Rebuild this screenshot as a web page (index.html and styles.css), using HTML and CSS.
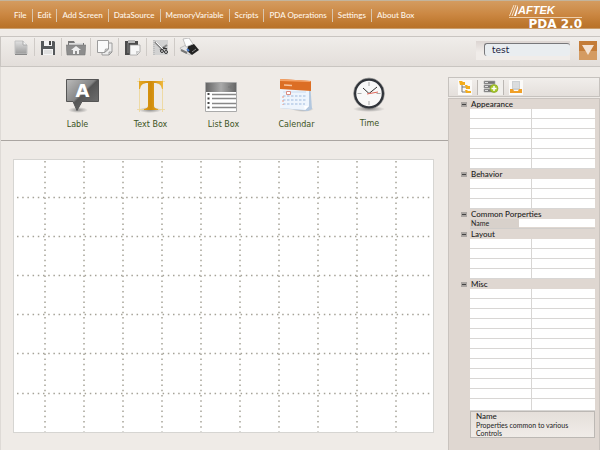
FILE: index.html
```html
<!DOCTYPE html>
<html lang="en">
<head>
<meta charset="utf-8">
<title>PDA 2.0</title>
<link rel="stylesheet" href="styles.css">
</head>
<body>
<header class="topbar">
  <nav class="menu">
    <a href="#">File</a><a href="#">Edit</a><a href="#">Add Screen</a><a href="#">DataSource</a><a href="#">MemoryVariable</a><a href="#">Scripts</a><a href="#">PDA Operations</a><a href="#">Settings</a><a href="#">About Box</a>
  </nav>
  <div class="brand">
    <div class="company">
      <svg width="9" height="11" viewBox="0 0 9 11"><path d="M.500 11 5 0M3 11 7 0" stroke="#f6dfc6" fill="none"/><path d="M5 11 9 0v3L7 11z" fill="#fff"/></svg>
      <span>AFTEK</span>
    </div>
    <div class="product">PDA 2.0</div>
  </div>
</header>

<div class="toolbar">
  <div class="tools">
    <button class="tool" aria-label="New"><svg width="14" height="17" viewBox="0 0 14 17"><defs><linearGradient id="gray" x2="0" y2="1"><stop stop-color="#e2e2e2"/><stop offset="1" stop-color="#9b9b9b"/></linearGradient></defs><path d="M1 2h8l4 4v9H1z" fill="url(#gray)" stroke="#c2c2c2"/><path d="M9 2v4h4" fill="#f4f4f4" stroke="#aaa"/><path d="M1 15.500h12" stroke="#888"/></svg></button>
    <button class="tool" aria-label="Save"><svg width="14" height="17" viewBox="0 0 14 17"><path d="M0 2h13l1 1v13H0z" fill="#55585a"/><path d="M3 2h8v5H3zM2 10h10v6H2z" fill="#f4f4f4"/><path d="M8 2h2v4H8z" fill="#444"/><path d="M3 12h8M3 14h8" stroke="#ccc"/></svg></button>
    <button class="tool wide" aria-label="Home"><svg width="20" height="17" viewBox="0 0 20 17"><path d="M2 2h6l1 2h9v10H2z" fill="#777"/><path d="M3 4h14v2H3z" fill="#ddd"/><path d="M0 6h20l-1 10H1z" fill="#8d8d8d" stroke="#777" stroke-width=".5"/><path d="m5 11 5-4 5 4h-2v4h-2v-3H9v3H7v-4z" fill="#eee"/></svg></button>
    <button class="tool clip" aria-label="Copy"><svg width="16" height="17" viewBox="0 0 16 17"><path d="M5 4h10v9l-3 3H5z" fill="#ededed" stroke="#9c9c9c"/><path d="M.5 1.500h11V10l-4 3.500h-7z" fill="#fafafa" stroke="#9c9c9c"/><path d="M11.500 10h-3l-1 3.500zM15 13h-3v3z" fill="#ddd" stroke="#888" stroke-width=".7"/></svg></button>
    <button class="tool clip" aria-label="Paste"><svg width="16" height="17" viewBox="0 0 16 17"><path d="M0 2h13v14H0z" fill="#4b4b4b"/><path d="M3 1h7v3H3z" fill="#b9b9b9"/><path d="M2 4h2v10H2z" fill="#666"/><path d="M5 6h10v7l-3 3H5z" fill="#f7f7f7" stroke="#999" stroke-width=".7"/><path d="M15 12h-4v4z" fill="#ccc"/></svg></button>
    <button class="tool clip" aria-label="Cut"><svg width="16" height="17" viewBox="0 0 16 17"><path d="M0 1h15v15H0z" fill="#d2d2d2"/><path d="M1 1v15" stroke="#aaa" stroke-dasharray="1 1"/><path d="m2 3 8 8M14 6l-7 5" stroke="#888" stroke-width="2"/><path d="m3 3 7 7" stroke="#fafafa"/><circle cx="9" cy="12" r="1.500" fill="none" stroke="#333"/><circle cx="13" cy="13" r="1.500" fill="none" stroke="#333"/><path d="m10 9 4 1" stroke="#333" stroke-width="1.500"/></svg></button>
    <button class="tool wide" aria-label="Print"><svg width="20" height="18" viewBox="0 0 20 18"><path d="m1 10 6-3 11 4-7 6-8-4z" fill="#e6e6e6" stroke="#999" stroke-width=".5"/><path d="m9 8 6-2 5 6-7 5-5-4z" fill="#222"/><path d="m4 1 6-1 4 6-7 3z" fill="#fff" stroke="#aaa" stroke-width=".7"/><path d="m2 12 6 3" stroke="#777" stroke-width="2"/><path d="m8 11 2 2" stroke="#4a7fd0" stroke-width="2"/><path d="m13 14 4-3" stroke="#888"/></svg></button>
  </div>
  <div class="picker">
    <div class="field"><input type="text" value="test" aria-label="Screen name"></div>
    <button class="drop" aria-label="Show screens"><svg width="12" height="11" viewBox="0 0 12 11"><path d="M0 0h12L6 10z" fill="#f3e3d5"/></svg></button>
  </div>
</div>

<main class="work">
  <section class="editor">
    <div class="palette">
      <button class="widget"><svg width="45" height="35" viewBox="-10 0 45 35"><defs><linearGradient id="tag" x2="1" y2="1"><stop stop-color="#bcbcbc"/><stop offset=".45" stop-color="#858585"/><stop offset=".5" stop-color="#555"/><stop offset="1" stop-color="#777"/></linearGradient><radialGradient id="shade"><stop stop-color="#777" stop-opacity=".8"/><stop offset="1" stop-color="#777" stop-opacity="0"/></radialGradient></defs><ellipse cx="13" cy="32" rx="10" ry="3" fill="url(#shade)"/><path d="M1.500 1.500h32v22H17l-5 9-4-9H1.500z" fill="url(#tag)" stroke="#555"/><text x="17.500" y="19" text-anchor="middle" class="glyph-a">A</text></svg><span>Lable</span></button>
      <button class="widget"><svg width="35" height="35" viewBox="0 0 35 35"><defs><linearGradient id="gold" x2="1"><stop stop-color="#e5a724"/><stop offset=".5" stop-color="#d08b0b"/><stop offset="1" stop-color="#efb83d"/></linearGradient></defs><ellipse cx="17" cy="32" rx="12" ry="3" fill="url(#shade)"/><path d="M6.500 0v34M29.500 0v34M4 3.500h28M4 31.500h28" stroke="#edd694" stroke-width=".8" fill="none"/><path d="M6 3h24v8h-1c-1-4-2-5-6-6h-2v22c0 3 1 3 4 4v1H11v-1c3-1 4-1 4-4V5h-2c-4 1-5 2-6 6H6z" fill="url(#gold)"/></svg><span>Text Box</span></button>
      <button class="widget"><svg width="37" height="35" viewBox="0 0 37 35"><defs><linearGradient id="bar" x2="1"><stop stop-color="#666"/><stop offset=".5" stop-color="#aaa"/><stop offset="1" stop-color="#666"/></linearGradient></defs><path d="M.500 4.500h31v29H.500z" fill="#fff" stroke="#aaa"/><path d="M1 5h30v9H1z" fill="url(#bar)"/><path d="M23 9h5M26 7v4" stroke="#777"/><g stroke="#888" stroke-width="1.500"><path d="M7 16.500h24M7 20.500h24M7 25.500h24M7 29.500h24"/></g><path d="M3.500 15v18" stroke="#444" stroke-width="2" stroke-dasharray="2 2.500"/></svg><span>List Box</span></button>
      <button class="widget"><svg width="35" height="35" viewBox="0 0 35 35"><ellipse cx="24" cy="31" rx="11" ry="3" fill="url(#shade)"/><path d="m1 3 30 1 2 27-4 2L1 30z" fill="#b4c8df"/><path d="m1 10 29 1v17l-4 4L1 30z" fill="#eef5fd"/><path d="m1 1 31 2v10L1 11z" fill="#dc6e24"/><path d="m1 1 31 2-1 1-30-1z" fill="#f4a469"/><path d="m5 7 8 .500" stroke="#f7c59f" stroke-width="1.500"/><path d="M4 18h24M4 22h24M4 26h22" stroke="#b9cde8" stroke-width="1.700" stroke-dasharray="2.500 1.500"/><path d="M4 14h23" stroke="#c9dcf1"/><path d="M7.500 13.500h4v3h-4z" fill="#fff" stroke="#db8d82"/><path d="M4 18v9" stroke="#ef9c83" stroke-dasharray="2 2"/><path d="m30 28-4 4-1-4z" fill="#fff"/></svg><span>Calendar</span></button>
      <button class="widget raised"><svg width="35" height="35" viewBox="0 0 35 35"><ellipse cx="17" cy="32" rx="16" ry="3" fill="url(#shade)"/><circle cx="17" cy="16.500" r="14" fill="#f8f8f8" stroke="#30343a" stroke-width="2.500"/><circle cx="17" cy="16.500" r="15.500" fill="none" stroke="#888" stroke-width=".6"/><path d="M17 5v4M17 24v4M5.500 16.500h4M24.500 16.500h4" stroke="#aaa"/><path d="m11 11 6 5.500L25 10" fill="none" stroke="#333"/><path d="m15 17 11-2" stroke="#e06659"/></svg><span>Time</span></button>
    </div>
    <div class="stage">
      <svg class="canvas" aria-label="Screen design grid">
        <g class="dots">
          <line x1="31" y1="1" x2="31" y2="100%"/><line x1="70" y1="1" x2="70" y2="100%"/><line x1="109" y1="1" x2="109" y2="100%"/><line x1="148" y1="1" x2="148" y2="100%"/><line x1="187" y1="1" x2="187" y2="100%"/><line x1="226" y1="1" x2="226" y2="100%"/><line x1="265" y1="1" x2="265" y2="100%"/><line x1="304" y1="1" x2="304" y2="100%"/><line x1="343" y1="1" x2="343" y2="100%"/><line x1="382" y1="1" x2="382" y2="100%"/>
          <line x1="3" y1="37.500" x2="100%" y2="37.500"/><line x1="3" y1="76.500" x2="100%" y2="76.500"/><line x1="3" y1="115.500" x2="100%" y2="115.500"/><line x1="3" y1="154.500" x2="100%" y2="154.500"/><line x1="3" y1="193.500" x2="100%" y2="193.500"/><line x1="3" y1="233.500" x2="100%" y2="233.500"/>
        </g>
      </svg>
    </div>
  </section>

  <aside class="side">
    <div class="tabs">
      <button class="tab" aria-label="Categorized"><svg width="14" height="14" viewBox="0 0 14 14"><path d="M4 4v8h5M4 7h4" fill="none" stroke="#777"/><path d="M1 1h3l1 1h2v3H2zM7 5h2l1 1h2v3H8zM7 10h2l1 1h3v2H8z" fill="#f3ac1c"/></svg></button>
      <button class="tab mid" aria-label="Data"><svg width="16" height="14" viewBox="0 0 16 14"><path d="M1 1h11v3H1zM1 5h11v3H1zM1 9h11v3H1z" fill="#777" stroke="#aaa" stroke-width=".6"/><path d="M2 2.500h3M2 6.500h3M2 10.500h3" stroke="#ddd"/><circle cx="11" cy="8.500" r="4" fill="#a7c928" stroke="#839e24" stroke-width=".6"/><path d="M8.500 8.500h5M11 6v5" stroke="#fff" stroke-width="1.500"/></svg></button>
      <button class="tab" aria-label="Page"><svg width="14" height="14" viewBox="0 0 14 14"><path d="M3 1h8v9H3z" fill="#ccd0d2"/><path d="M4 3h6M4 5h6M4 7h6" stroke="#e9e9e9"/><path d="M1 9h3l1 2h4l1-2h3v4H1z" fill="#f0a028"/></svg></button>
    </div>
    <div class="props">
      <h2><button aria-label="Collapse Appearance"></button>Appearance</h2>
      <table><tbody><tr><td></td><td></td></tr><tr><td></td><td></td></tr><tr><td></td><td></td></tr><tr><td></td><td></td></tr><tr><td></td><td></td></tr><tr><td></td><td></td></tr></tbody></table>
      <h2><button aria-label="Collapse Behavior"></button>Behavior</h2>
      <table><tbody><tr><td></td><td></td></tr><tr><td></td><td></td></tr><tr><td></td><td></td></tr></tbody></table>
      <h2><button aria-label="Collapse Common Properties"></button>Common Porperties</h2>
      <div class="named"><label for="prop-name">Name</label><input id="prop-name" type="text"></div>
      <h2><button aria-label="Collapse Layout"></button>Layout</h2>
      <table><tbody><tr><td></td><td></td></tr><tr><td></td><td></td></tr><tr><td></td><td></td></tr><tr><td></td><td></td></tr></tbody></table>
      <h2><button aria-label="Collapse Misc"></button>Misc</h2>
      <table><tbody><tr><td></td><td></td></tr><tr><td></td><td></td></tr><tr><td></td><td></td></tr><tr><td></td><td></td></tr><tr><td></td><td></td></tr><tr><td></td><td></td></tr><tr><td></td><td></td></tr><tr><td></td><td></td></tr><tr><td></td><td></td></tr><tr><td></td><td></td></tr><tr><td></td><td></td></tr><tr class="last"><td></td><td></td></tr></tbody></table>
      <div class="hint"><strong>Name</strong><p>Properties common to various Controls</p></div>
    </div>
  </aside>
</main>
</body>
</html>
```
FILE: styles.css
```css
* { box-sizing: border-box; }
body {
  margin: 0;
  min-height: 100vh;
  display: flex;
  flex-direction: column;
  background: #efebe7;
  color: #222;
  font-family: Lato, "Noto Sans", sans-serif;
  font-size: 8px;
}
button, input {
  font: inherit;
  color: inherit;
  margin: 0;
  padding: 0;
  border: 0;
  background: none;
}
svg { display: block; }

.topbar {
  display: flex;
  justify-content: space-between;
  height: 29px;
  padding: 0 18px 0 9px;
  background: linear-gradient(#d49c60, #cb8742 50%, #bd772e 85%, #b97229);
  border-top: 1px solid #c3b49c;
  border-bottom: 1px solid #c99c6a;
}
.menu { display: flex; align-items: center; padding-top: 2px; }
.menu a {
  padding: 0 5px;
  color: #fff6ea;
  font-size: 8px;
  font-weight: 500;
  line-height: 13px;
  text-decoration: none;
  white-space: nowrap;
}
.menu a + a { border-left: 1px solid #d9c6ae; }
.brand { width: 73px; color: #fff; padding-top: 2px; }
.company {
  display: flex;
  align-items: center;
  height: 15px;
  border-bottom: 1px solid #edcda9;
  font: italic bold 11px/13px "Liberation Sans", sans-serif;
}
.product {
  font: bold 12px/12px "DejaVu Sans", sans-serif;
  text-align: right;
}

.toolbar {
  display: flex;
  justify-content: space-between;
  height: 31px;
  margin-top: 7px;
  border: solid #c9c5c1;
  border-width: 1px 0 1px 1px;
  background: linear-gradient(#f0edea, #e3deda);
}
.tools { display: flex; padding: 1px 0 0 6px; height: 20px; }
.tool {
  display: grid;
  place-items: center;
  width: 27px;
  height: 18px;
}
.tool.clip { width: 28px; }
.tool.wide { width: 29px; }
.tool + .tool { border-left: 1px solid #cfcbc7; }
.picker { display: flex; gap: 9px; padding: 4px 3px 0 0; }
.field {
  width: 94px;
  height: 19px;
  padding: 2px 0 0 8px;
  background: linear-gradient(#dcd5d2, #f0ece9 60%);
}
.field input {
  display: block;
  width: 86px;
  height: 13px;
  padding-left: 7px;
  border: solid #77777a;
  border-width: 1px 0 0 1px;
  border-radius: 3px;
  background: #e9edf0;
  color: #18203c;
  font: 9px/11px "DejaVu Sans", sans-serif;
}
.drop {
  display: grid;
  place-items: center;
  width: 18px;
  height: 19px;
  background: linear-gradient(#c47c38 50%, #d49b62 50%);
}

.work { flex: 1; display: grid; grid-template-columns: 1fr 152px; }
.editor { display: flex; flex-direction: column; border-left: 1px solid #dedad6; }
.palette {
  display: grid;
  grid-template-columns: repeat(5, 73px);
  height: 74px;
  padding: 11px 0 0 40px;
  border-bottom: 1px solid #aaa5a1;
}
.widget {
  display: flex;
  flex-direction: column;
  align-items: center;
  gap: 6px;
  height: 55px;
  color: #3d5424;
  font: 8px/12px "DejaVu Sans", sans-serif;
}
.widget.raised { margin-top: -1px; }
.glyph-a { font: bold 18px "DejaVu Sans", sans-serif; fill: #fff; }
.stage { flex: 1; display: flex; padding: 18px 14px 17px 12px; }
.canvas {
  flex: 1;
  width: 100%;
  min-height: 200px;
  background: #fff;
  border: 1px solid #d6d5d2;
}
.dots line { stroke: #a5a297; stroke-width: 1.500; stroke-dasharray: 1.500 3.700; }

.side { display: flex; flex-direction: column; padding-top: 10px; }
.tabs {
  display: flex;
  align-items: center;
  gap: 5px;
  height: 20px;
  margin-bottom: 1px;
  padding-left: 9px;
  border: 1px solid #c6c2be;
  background: linear-gradient(#f1eeeb, #e4dfdb);
}
.tab { display: grid; place-items: center; width: 14px; height: 15px; background: #fbfaf8; }
.tab.mid { width: 27px; padding: 0 5px; border: solid #bbb7b3; border-width: 0 1px; background: #f1efec; }
.props {
  flex: 1;
  padding: 0 4px 8px 21px;
  border: solid #c9c3be;
  border-width: 1px 1px 0;
  background: #dfd7d1;
}
.props h2 {
  display: flex;
  align-items: center;
  gap: 4px;
  height: 10px;
  margin: 0 0 0 -9px;
  color: #1c1c1c;
  font-size: 8px;
  font-weight: 500;
  line-height: 10px;
}
.props h2 button {
  width: 6px;
  height: 5px;
  background: linear-gradient(#444, #444) center / 4px 1px no-repeat #aaa5a2;
}
.props table { width: 100%; border-collapse: separate; border-spacing: 0; table-layout: fixed; background: #fff; }
.props td { height: 10px; padding: 0; border-bottom: 1px solid #d8d6d4; }
.props td:first-child { width: 49%; }
.props td + td { border-left: 1px solid #d8d6d4; }
.props .last td { height: 12px; }
.named { display: flex; height: 10px; border-bottom: 1px solid #d0cdca; }
.named label { width: 49px; line-height: 9px; background: #d8d1cb; padding-left: 1px; font-size: 7px; }
.named input { flex: 1; min-width: 0; height: 8px; background: #fff; }
.hint {
  padding: 0 10px 0 5px;
  border: 1px solid #bcb8b4;
  background: linear-gradient(#e5dfda, #f0ece8);
  color: #222;
  font-size: 7px;
  line-height: 8px;
}
.hint strong { display: block; font-size: 8px; font-weight: 500; line-height: 9px; }
.hint p { margin: 0; }
```
